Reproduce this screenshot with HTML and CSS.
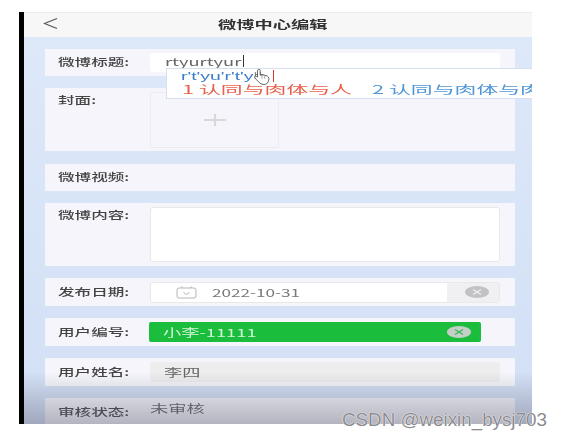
FILE: index.html
```html
<!DOCTYPE html>
<html lang="zh">
<head>
<meta charset="utf-8">
<title>微博中心编辑</title>
<link rel="stylesheet" href="styles.css">
</head>
<body>
<div class="stage">
  <div class="edge"></div>
  <div class="app">
    <header class="topbar">
      <svg class="back" width="15" height="11" viewBox="0 0 15 11"><path d="M14 .5 L1.5 5.5 L14 10.5" fill="none" stroke="#555" stroke-width="1.1"/></svg>
      <h1 class="title"><span class="wide">微博中心编辑</span></h1>
    </header>
    <main class="form">
      <section class="row h27">
        <label class="label"><span class="wide">微博标题:</span></label>
        <div class="field input plain"><span class="wide val">rtyurtyur</span><i class="caret"></i></div>
      </section>
      <section class="row h63 top cover">
        <label class="label"><span class="wide">封面:</span></label>
        <div class="upload"><svg width="22" height="12" viewBox="0 0 22 12"><path d="M0 6H22M11 0V12" stroke="#d8d8dc" stroke-width="2.2"/></svg></div>
      </section>
      <section class="row h27">
        <label class="label"><span class="wide">微博视频:</span></label>
      </section>
      <section class="row h63 top">
        <label class="label"><span class="wide">微博内容:</span></label>
        <div class="field area"></div>
      </section>
      <section class="row h28">
        <label class="label"><span class="wide">发布日期:</span></label>
        <div class="field date">
          <svg class="cal" width="21" height="13" viewBox="0 0 21 13"><rect x="1" y="2" width="19" height="10" rx="2" fill="none" stroke="#b5b5b5"/><path d="M7.5 6.5 L10.5 8.5 L13.5 6.5" fill="none" stroke="#b5b5b5"/><path d="M6 0.5V2M15 0.5V2" stroke="#b5b5b5"/></svg>
          <span class="wide val date-val">2022-10-31</span>
          <div class="clearbox"><svg class="clear" width="24" height="12" viewBox="0 0 24 12"><ellipse cx="12" cy="6" rx="12" ry="6" fill="#c2c2c4"/><path d="M8 3.5 L16 8.5 M16 3.5 L8 8.5" stroke="#f2f2f2" stroke-width="1.2"/></svg></div>
        </div>
      </section>
      <section class="row h28">
        <label class="label"><span class="wide">用户编号:</span></label>
        <div class="field pick"><span class="wide pick-val">小李-11111</span><svg class="clear" width="24" height="12" viewBox="0 0 24 12"><ellipse cx="12" cy="6" rx="12" ry="6" fill="#c5cfc8"/><path d="M8 3.5 L16 8.5 M16 3.5 L8 8.5" stroke="#2fb856" stroke-width="1.2"/></svg></div>
      </section>
      <section class="row h28">
        <label class="label"><span class="wide">用户姓名:</span></label>
        <div class="field readonly"><span class="wide val">李四</span></div>
      </section>
      <section class="row last">
        <label class="label"><span class="wide">审核状态:</span></label>
        <div class="status"><span class="wide val">未审核</span></div>
      </section>
    </main>
    <div class="shade"></div>
    <div class="ime">
      <div class="ime-comp"><span class="wide comp-text">r't'yu'r't'y</span><span class="ime-tail">hh</span><i class="ime-caret"></i></div>
      <div class="ime-cands">
        <span class="wide cand red">1 认同与肉体与人</span>
        <span class="wide cand blue">2 认同与肉体与肉</span>
      </div>
      <svg class="hand" width="18" height="18" viewBox="0 0 20 20"><path d="M5 3 C5 1 8 1 8 3 V8 L10 7.5 L13 8 L16 9 C18 10 18 13 17 15 C16 18 13 19 10 18 C7 17 5 14 2 11 C1 9 3 8.5 5 10 Z" fill="#fff" stroke="#444" stroke-width=".9"/><path d="M10 8V12M13 8.2V12" stroke="#777" stroke-width=".7"/></svg>
    </div>
  </div>
</div>
<div class="mark">CSDN @weixin_bysj703</div>
</body>
</html>
```
FILE: styles.css
```css
* { box-sizing: border-box; }
html, body { margin: 0; padding: 0; }
body {
  width: 562px;
  height: 440px;
  overflow: hidden;
  background: #fff;
  position: relative;
  font-family: "Noto Sans CJK SC", "Liberation Sans", sans-serif;
}
.stage {
  display: flex;
  padding: 12px 0 0 19px;
  height: 424px;
}
.edge { width: 5px; background: #000; flex: none; }
.app {
  width: 508px;
  flex: none;
  position: relative;
  overflow: hidden;
  display: flex;
  flex-direction: column;
  filter: blur(0.35px);
}
.wide {
  display: inline-block;
  transform: scaleX(1.66);
  transform-origin: left center;
  white-space: nowrap;
}
.topbar {
  height: 25px;
  flex: none;
  background: #f7f7f8;
  border-top: 1px solid #ececec;
  padding-bottom: 2px;
  display: flex;
  align-items: center;
  justify-content: center;
  position: relative;
}
.back { position: absolute; left: 19px; top: 5px; }
.title {
  margin: 0 8px 0 0;
  font-size: 11px;
  font-weight: 700;
  color: #333;
  width: 112px;
  line-height: 14px;
}
.form {
  flex: 1;
  background: linear-gradient(#dde8f9, #d2dff5);
  padding: 12px 17px 0 21px;
  display: flex;
  flex-direction: column;
  gap: 12px;
}
.row {
  background: #f5f5fb;
  display: flex;
  align-items: center;
  padding: 4px 15px 4px 13px;
  flex: none;
}
.row.top { align-items: flex-start; }
.cover { margin-bottom: 1px; }
.h27 { height: 27px; }
.h28 { height: 28px; }
.h63 { height: 63px; }
.last { height: 30px; }
.label {
  width: 92px;
  flex: none;
  font-size: 10.5px;
  font-weight: 500;
  line-height: 14px;
  color: #444;
  margin-top: -1px;
}
.label .wide { transform: scaleX(1.58); }
.top .label { padding-top: 2px; }
.field { flex: 1; border-radius: 3px; display: flex; align-items: center; }
.input, .area, .date { background: #fff; }
.input { height: 19px; padding: 0 0 3px 15px; }
.val { font-size: 11px; color: #666; line-height: 14px; }
.caret { width: 1px; height: 12px; background: #333; margin-left: 32px; }
.upload {
  width: 129px;
  height: 56px;
  border: 1px solid #ececf0;
  display: flex;
  align-items: center;
  justify-content: center;
}
.area { height: 55px; border: 1px solid #e8e8e8; }
.date {
  height: 21px;
  border: 1px solid #e8e8e8;
  padding-left: 25px;
  position: relative;
}
.date-val { margin-left: 15px; color: #777; }
.date-val.wide { transform: scaleX(1.56); }
.clearbox {
  margin-left: auto;
  width: 52px;
  height: 100%;
  background: #f0f0f2;
  display: flex;
  align-items: center;
  padding-left: 18px;
}
.pick {
  height: 20px;
  background: #1bbd3c;
  border-radius: 2px;
  padding: 0 10px 0 14px;
  margin: 0 19px 0 -1px;
  justify-content: space-between;
}
.pick-val { font-size: 11px; color: #d4f5dc; line-height: 14px; }
.readonly { height: 20px; background: #ededee; padding-left: 14px; }
.status { flex: 1; display: flex; align-self: flex-start; margin-top: -1px; }
.last .label { padding-top: 4px; align-self: flex-start; }
.shade {
  position: absolute;
  left: 0;
  right: 0;
  bottom: 0;
  height: 52px;
  background: linear-gradient(rgba(90, 90, 110, 0), rgba(90, 90, 110, .42));
  pointer-events: none;
}
.ime {
  position: absolute;
  left: 142px;
  top: 56px;
  width: 370px;
  height: 31px;
  background: #fff;
  border: 1px solid #d6e0f2;
  font-size: 10.5px;
}
.ime-comp {
  position: absolute;
  left: 14px;
  top: 0;
  height: 14px;
  line-height: 14px;
  color: #3a7fc8;
  font-family: "Liberation Sans", sans-serif;
  font-size: 10.5px;
  width: 96px;
  display: flex;
}
.comp-text.wide { transform: scaleX(1.85); }
.ime-tail { margin-left: 34px; color: #555; font-size: 9px; }
.ime-caret { position: absolute; left: 92px; top: 1px; width: 1px; height: 12px; background: #d33; }
.ime-cands {
  position: absolute;
  left: 15px;
  top: 12px;
  height: 16px;
  display: flex;
  white-space: nowrap;
}
.cand { font-size: 11.5px; line-height: 16px; }
.cand.wide { transform: scaleX(1.9); }
.red { color: #e8604c; width: 190px; }
.blue { color: #4f95d6; }
.hand { position: absolute; left: 86px; top: -1px; }
.mark {
  position: absolute;
  left: 342px;
  top: 410px;
  font-family: "Liberation Sans", sans-serif;
  font-size: 18.8px;
  line-height: 20px;
  color: #8b8b8f;
  text-shadow: 0 0 1px #fff, 0 0 1px #fff;
  white-space: nowrap;
}
```
